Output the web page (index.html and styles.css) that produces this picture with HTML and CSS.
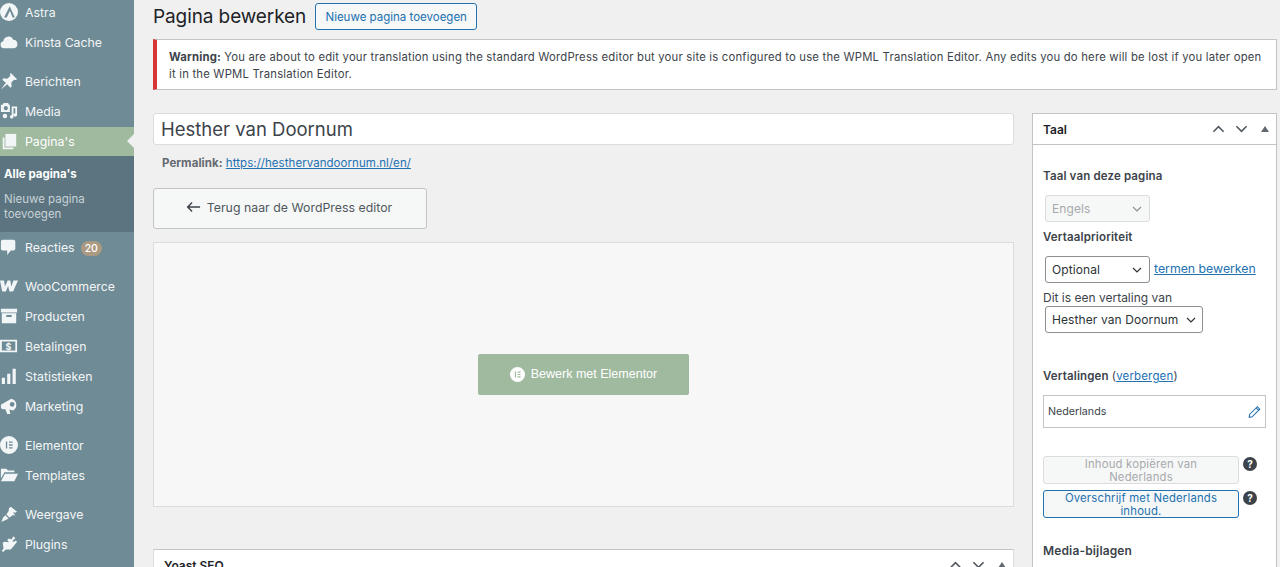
FILE: index.html
```html
<!DOCTYPE html>
<html lang="nl">
<head>
<meta charset="utf-8">
<title>Pagina bewerken</title>
<link rel="stylesheet" href="styles.css">
</head>
<body>
<div class="app">
  <nav class="side">
    <a class="item"><svg viewBox="0 0 20 20"><circle cx="10" cy="10" r="10"/><path class="cut" d="M10.800 3.500 4.500 16h3l3.500-7.500L14 16h2.500z"/></svg><span>Astra</span></a>
    <a class="item"><svg viewBox="0 0 20 20"><path d="M4.500 17a4 4 0 0 1-.8-7.900A5.700 5.700 0 0 1 14.600 7.500 4.800 4.800 0 0 1 15.500 17z"/></svg><span>Kinsta Cache</span></a>
    <a class="item gap"><svg viewBox="0 0 20 20"><path d="M12 1 19 8 17.500 9 15.500 8.500 12.500 12 13 16 11.500 17.500 8 13.500 1 19.500 6.500 12 2.500 8.500 4 7 8 7.500 11.500 4.500 11 2.500z"/></svg><span>Berichten</span></a>
    <a class="item"><svg viewBox="0 0 20 20"><path fill-rule="evenodd" d="M1 3h2l1-2h5l1 2h1v8H1zM6.500 4.500a2.300 2.300 0 1 0 .01 0zM13 5h6v9.500a2 2 0 1 1-2-2V7h-2v9.500a2 2 0 1 1-2-2zM5.500 13a2.500 2.500 0 1 1 0 5 2.500 2.500 0 0 1 0-5z"/></svg><span>Media</span></a>
    <a class="item current"><svg viewBox="0 0 20 20"><path d="M6 1h12v14H6z"/><path d="M3 5h2v11h10v2H3z"/></svg><span>Pagina's</span></a>
    <div class="sub">
      <a class="sub-on">Alle pagina's</a>
      <a>Nieuwe pagina toevoegen</a>
    </div>
    <a class="item"><svg viewBox="0 0 20 20"><path d="M3 2h12a2 2 0 0 1 2 2v8a2 2 0 0 1-2 2h-3l-4 5v-5H3a2 2 0 0 1-2-2V4a2 2 0 0 1 2-2z"/></svg><span>Reacties</span><b class="count">20</b></a>
    <a class="item gap"><svg viewBox="0 0 20 20"><path d="M0 4h4.500l1 6.500L8.500 4h3l1 6.500L15 4h5l-5.500 12h-4l-1.500-6-2.500 6h-4z"/></svg><span>WooCommerce</span></a>
    <a class="item"><svg viewBox="0 0 20 20"><path fill-rule="evenodd" d="M1 2h18v4H1zM2 7h16v11H2zM7 9v2h6V9z"/></svg><span>Producten</span></a>
    <a class="item"><svg viewBox="0 0 20 20"><path fill-rule="evenodd" d="M0 3h19v14H0zM2 5v10h15V5z"/><text x="9.500" y="14" text-anchor="middle" class="dollar">$</text></svg><span>Betalingen</span></a>
    <a class="item"><svg viewBox="0 0 20 20"><path d="M2 12h3.500v7H2zM8 7.500h3.500V19H8zM14 2h3.500v17H14z"/></svg><span>Statistieken</span></a>
    <a class="item"><svg viewBox="0 0 20 20"><path fill-rule="evenodd" d="M1 8.500 12.500 2a7 7 0 0 1 2 13l-4-1 1 5H8l-2-5.500H3a2 2 0 0 1-2-2zM13.500 5.500a2.600 2.600 0 1 0 .01 0z"/></svg><span>Marketing</span></a>
    <a class="item gap"><svg viewBox="0 0 20 20"><path fill-rule="evenodd" d="M10 0a10 10 0 1 1 0 20 10 10 0 0 1 0-20zM6.500 6v8H8V6zM10 6v1.600h4V6zM10 9.200v1.600h4V9.200zM10 12.400V14h4v-1.600z"/></svg><span>Elementor</span></a>
    <a class="item"><svg viewBox="0 0 20 20"><path d="M1 3h6l2 2h7v2H5L1 14zM5.500 8.500H20L16 17H1z"/></svg><span>Templates</span></a>
    <a class="item gap"><svg viewBox="0 0 20 20"><path d="M12 2 19 7.500 17 8.500 14.500 8 17 12 14.500 11 10.500 14 7 10.500 9.500 7 10 3.500zM6 11.500 9.500 15 6 17 1.500 18.500 3.500 14z"/></svg><span>Weergave</span></a>
    <a class="item"><svg viewBox="0 0 20 20"><path d="M15 1.500 17 3.500 13.500 7 16 7.500 17.500 6 19 7.500 15 12.500 12 16H6.500L3.500 19 2 17.500 4 15 3 8.500 5 7.500 10 8 8 5.500 10 4 12.500 5z"/></svg><span>Plugins</span></a>
  </nav>
  <main class="main">
    <header class="head">
      <h1>Pagina bewerken</h1>
      <a class="add">Nieuwe pagina toevoegen</a>
    </header>
    <div class="notice"><p><strong>Warning:</strong> You are about to edit your translation using the standard WordPress editor but your site is configured to use the WPML Translation Editor. Any edits you do here will be lost if you later open it in the WPML Translation Editor.</p></div>
    <div class="cols">
      <div class="left">
        <div class="title">Hesther van Doornum</div>
        <div class="perma"><strong>Permalink:</strong> <a>https://hesthervandoornum.nl/en/</a></div>
        <a class="back"><svg viewBox="0 0 16 12"><path d="M15 6H2M6.500 1.200 1.800 6l4.700 4.800"/></svg><span>Terug naar de WordPress editor</span></a>
        <div class="canvas">
          <a class="edit"><svg viewBox="0 0 20 20"><path fill-rule="evenodd" d="M10 0a10 10 0 1 1 0 20 10 10 0 0 1 0-20zM6.500 6v8H8V6zM10 6v1.600h4V6zM10 9.200v1.600h4V9.200zM10 12.400V14h4v-1.600z"/></svg><span>Bewerk met Elementor</span></a>
        </div>
        <section class="box yoast">
          <div class="box-head yoast-head">
            <h2>Yoast SEO</h2>
            <div class="ctrl">
              <svg viewBox="0 0 14 8"><path d="M1.500 7 7 1.500 12.500 7"/></svg>
              <svg viewBox="0 0 14 8"><path d="M1.500 1 7 6.500 12.500 1"/></svg>
              <i class="tri"></i>
            </div>
          </div>
        </section>
      </div>
      <aside class="box right">
        <div class="box-head">
          <h2>Taal</h2>
          <div class="ctrl">
            <svg viewBox="0 0 14 8"><path d="M1.500 7 7 1.500 12.500 7"/></svg>
            <svg viewBox="0 0 14 8"><path d="M1.500 1 7 6.500 12.500 1"/></svg>
            <i class="tri"></i>
          </div>
        </div>
        <div class="box-body">
          <h3 class="l-lang">Taal van deze pagina</h3>
          <div class="sel dis"><span>Engels</span><svg viewBox="0 0 10 6"><path d="M1 1l4 4 4-4"/></svg></div>
          <h3 class="l-prio">Vertaalprioriteit</h3>
          <div class="prio">
            <div class="sel"><span>Optional</span><svg viewBox="0 0 10 6"><path d="M1 1l4 4 4-4"/></svg></div>
            <a class="link">termen bewerken</a>
          </div>
          <div class="l-of">Dit is een vertaling van</div>
          <div class="sel wide"><span>Hesther van Doornum</span><svg viewBox="0 0 10 6"><path d="M1 1l4 4 4-4"/></svg></div>
          <h3 class="l-tr">Vertalingen <span class="nb">(<a class="link">verbergen</a>)</span></h3>
          <div class="tr">
            <span>Nederlands</span>
            <svg viewBox="0 0 16 16"><path d="M11.500 1.500 14.500 4.500 5 14 1.500 14.500 2 11zM10 3l3 3"/></svg>
          </div>
          <div class="act first">
            <div class="btn off">Inhoud kopiëren van Nederlands</div>
            <i class="q">?</i>
          </div>
          <div class="act">
            <div class="btn on">Overschrijf met Nederlands inhoud.</div>
            <i class="q">?</i>
          </div>
          <h3 class="l-media">Media-bijlagen</h3>
        </div>
      </aside>
    </div>
  </main>
</div>
</body>
</html>
```

FILE: styles.css
```css
* { box-sizing: border-box; }
html, body { margin: 0; height: 567px; overflow: hidden; }
body { background: #f0f0f1; color: #3c434a; font-family: Inter, "Liberation Sans", sans-serif; font-size: 12.5px; }
h1, h2, h3, p { margin: 0; }
.app { display: flex; height: 567px; overflow: hidden; }

.side { width: 134px; flex: none; background: #6f8b96; color: #f2f5f6; height: 567px; overflow: hidden; }
.item { display: flex; align-items: center; height: 30px; font-size: 12.300px; color: #f3f6f7; }
.item:first-child { margin-top: -3px; }
.item svg { width: 18px; height: 18px; margin-left: 0; margin-right: 7px; flex: none; fill: #f3f6f7; }
.item svg .cut { fill: #6f8b96; }
.item .dollar { fill: #f3f6f7; font: 700 10px Inter, sans-serif; }
.item.gap { margin-top: 9px; }
.item.current { background: #9fba9f; position: relative; color: #fff; height: 29px; margin-top: 1px; }
.item.current::after { content: ""; position: absolute; right: 0; top: 7px; border: 7px solid transparent; border-left: 0; border-right-color: #f0f0f1; }
.count { margin-left: 6px; background: #ab9a81; color: #fff; border-radius: 8px; font-size: 10.500px; font-weight: 500; height: 15px; line-height: 15px; padding: 0 4px; margin-top: 2px; }
.sub { background: #5b7480; height: 76px; padding: 11px 4px 0; font-size: 11.500px; line-height: 15px; color: #c8d2d6; }
.sub a { display: block; }
.sub-on { color: #fff; font-weight: 700; margin-bottom: 10px; }

.main { flex: none; width: 1143px; padding: 3px 0 0 19px; height: 567px; overflow: hidden; }
.head { display: flex; align-items: center; height: 27px; }
h1 { font-size: 19px; font-weight: 400; color: #1d2327; letter-spacing: -0.1px; }
.add { margin-left: 9px; height: 27px; width: 162px; border: 1px solid #2271b1; border-radius: 3px; background: #f6f7f7; color: #2271b1; font-size: 11.500px; display: flex; align-items: center; justify-content: center; }
.notice { margin-top: 9px; width: 1124px; height: 51px; background: #fff; border: 1px solid #c3c4c7; border-left: 4px solid #d63638; padding: 9px 10px 9px 12px; font-size: 11.300px; line-height: 16.500px; letter-spacing: 0.2px; }
.cols { display: flex; margin-top: 23px; width: 1124px; }
.left { width: 861px; flex: none; margin-right: 18px; }
.title { height: 32px; background: #fff; border: 1px solid #dcdcde; border-radius: 3px; font-size: 18.500px; line-height: 31px; padding-left: 7px; color: #3c434a; }
.perma { margin-top: 10px; padding-left: 9px; font-size: 11.500px; line-height: 17px; color: #646970; letter-spacing: 0.05px; }
.perma a, .link { color: #2271b1; text-decoration: underline; }
.back { margin-top: 16px; width: 274px; height: 41px; display: flex; align-items: center; justify-content: center; background: #f6f7f7; border: 1px solid #c3c4c7; border-radius: 3px; font-size: 12.300px; color: #50575e; padding: 0 2px 3px 0; letter-spacing: 0.03px; }
.back svg { width: 15px; height: 12px; margin-right: 6px; fill: none; stroke: #3c434a; stroke-width: 1.500; }
.canvas { margin-top: 13px; height: 265px; background: #f7f7f7; border: 1px solid #dcdcde; display: flex; align-items: center; justify-content: center; }
.edit { width: 211px; height: 41px; background: #9fba9f; border-radius: 2px; color: #fff; display: flex; align-items: center; justify-content: center; font-family: "Liberation Sans", sans-serif; font-size: 12.500px; padding-bottom: 1px; }
.edit svg { width: 15px; height: 15px; fill: #fff; margin-right: 6px; }

.box { background: #fff; border: 1px solid #c3c4c7; }
.yoast { margin-top: 42px; height: 60px; border-color: #c3c4c7 #dcdcde; }
.box-head { display: flex; align-items: center; justify-content: space-between; height: 31px; border-bottom: 1px solid #c3c4c7; padding: 0 7px 0 10px; }
.yoast-head { height: 28px; border: 0; margin-top: 1px; }
h2 { font-size: 12px; font-weight: 600; color: #1d2327; }
.ctrl { display: flex; align-items: center; }
.ctrl svg { width: 13px; height: 8px; fill: none; stroke: #50575e; stroke-width: 1.700; margin-right: 10px; }
.ctrl svg + svg { margin-right: 13px; }
.tri { display: block; border: 4px solid transparent; border-top: 0; border-bottom: 6px solid #646970; }

.right { width: 245px; flex: none; height: 480px; }
.box-body { padding: 0 10px; }
h3 { font-size: 11.500px; font-weight: 600; color: #3c434a; line-height: 16px; letter-spacing: 0.15px; }
.l-lang { padding-top: 23px; }
.sel { display: flex; align-items: center; justify-content: space-between; height: 27px; width: 105px; margin-left: 2px; padding: 0 7px 0 6px; background: #fff; border: 1px solid #8c8f94; border-radius: 3px; font-size: 12px; color: #2c3338; letter-spacing: 0.1px; }
.sel svg { width: 10px; height: 6px; fill: none; stroke: #2c3338; stroke-width: 1.200; }
.sel.dis { margin-top: 11px; background: #f6f7f7; border-color: #dcdcde; color: #a7aaad; }
.sel.dis svg { stroke: #8c8f94; }
.l-prio { margin-top: 7px; }
.prio { display: flex; align-items: center; margin-top: 11px; }
.prio .link { margin-left: 4px; font-size: 12.300px; position: relative; top: -1px; }
.l-of { margin-top: 7px; font-size: 12px; line-height: 16px; }
.sel.wide { width: 158px; padding-right: 6px; white-space: nowrap; }
.l-tr { margin-top: 35px; }
.nb { font-weight: 400; }
.tr { margin-top: 11px; height: 33px; display: flex; align-items: center; justify-content: space-between; border: 1px solid #c3c4c7; padding: 0 4px; font-size: 10.700px; }
.tr svg { width: 13px; height: 14px; fill: none; stroke: #2271b1; stroke-width: 1.300; }
.act { display: flex; align-items: flex-start; width: 214px; justify-content: space-between; }
.act.first { margin-top: 28px; }
.act + .act { margin-top: 6px; }
.btn { width: 196px; height: 28px; border: 1px solid; border-radius: 3px; background: #f6f7f7; text-align: center; font-size: 11.300px; line-height: 13px; padding: 1px 20px 0; letter-spacing: 0.2px; }
.btn.off { border-color: #dcdcde; color: #a7aaad; }
.btn.on { border: 1.500px solid #2271b1; color: #2271b1; }
.q { width: 14px; height: 14px; margin-top: 1px; border-radius: 50%; background: #3c434a; color: #fff; font: 700 10px/14px Inter, sans-serif; text-align: center; }
.l-media { margin-top: 25px; font-size: 12px; }
```
